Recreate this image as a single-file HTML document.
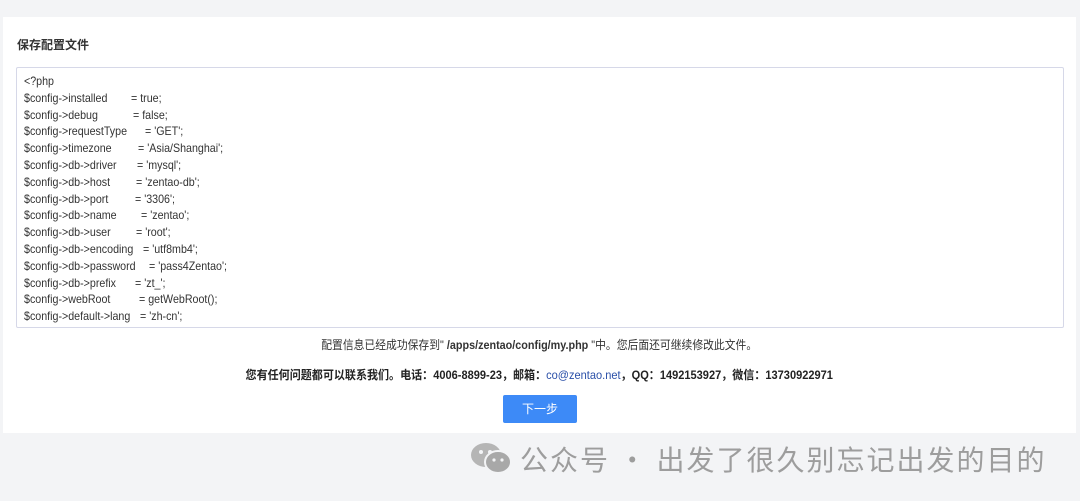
<!DOCTYPE html>
<html><head><meta charset="utf-8"><style>
body{margin:0;width:1080px;height:501px;background:#f3f4f6;font-family:"Liberation Sans","Noto Sans CJK SC",sans-serif;position:relative;overflow:hidden}
.card{position:absolute;left:3px;top:17px;width:1073px;height:416px;background:#fff}
h1{position:absolute;left:14px;top:19px;margin:0;font-size:12px;font-weight:bold;color:#333}
.ta{position:absolute;left:13px;top:50px;width:1046px;height:259px;border:1px solid #d6d8e8;border-radius:2px;overflow:hidden}
.l,.e{position:absolute;font-size:12px;color:#333;white-space:pre;transform:scaleX(0.89);transform-origin:0 0}
.l{left:7px}
.m1{position:absolute;top:319px;left:0;width:1073px;text-align:center;font-size:12px;color:#333}
.m2{position:absolute;top:349px;left:0;width:1073px;text-align:center;font-size:12px;color:#222;font-weight:bold}
.m1 span{display:inline-block;transform:scaleX(0.9)}
.m2 span{display:inline-block;transform:scaleX(0.92)}
.m2 a{color:#2a4fa8;font-weight:normal;text-decoration:none}
.btn{position:absolute;left:500px;top:378px;width:74px;height:28px;background:#3d8af7;border-radius:2px;color:#fff;font-size:12px;text-align:center;line-height:28px}
.wm{position:absolute;left:520px;top:439px;font-size:28px;color:#9d9d9d;font-family:"Noto Sans CJK SC",sans-serif;letter-spacing:2px;white-space:nowrap}
</style></head><body>
<div class="card">
<h1>保存配置文件</h1>
<div class="ta">
<div class="l" style="top:6px">&lt;?php</div>
<div class="l" style="top:23px">$config-&gt;installed</div><div class="e" style="left:114px;top:23px">= true;</div>
<div class="l" style="top:40px">$config-&gt;debug</div><div class="e" style="left:116px;top:40px">= false;</div>
<div class="l" style="top:56px">$config-&gt;requestType</div><div class="e" style="left:128px;top:56px">= 'GET';</div>
<div class="l" style="top:73px">$config-&gt;timezone</div><div class="e" style="left:121px;top:73px">= 'Asia/Shanghai';</div>
<div class="l" style="top:90px">$config-&gt;db-&gt;driver</div><div class="e" style="left:120px;top:90px">= 'mysql';</div>
<div class="l" style="top:107px">$config-&gt;db-&gt;host</div><div class="e" style="left:119px;top:107px">= 'zentao-db';</div>
<div class="l" style="top:124px">$config-&gt;db-&gt;port</div><div class="e" style="left:118px;top:124px">= '3306';</div>
<div class="l" style="top:140px">$config-&gt;db-&gt;name</div><div class="e" style="left:124px;top:140px">= 'zentao';</div>
<div class="l" style="top:157px">$config-&gt;db-&gt;user</div><div class="e" style="left:119px;top:157px">= 'root';</div>
<div class="l" style="top:174px">$config-&gt;db-&gt;encoding</div><div class="e" style="left:126px;top:174px">= 'utf8mb4';</div>
<div class="l" style="top:191px">$config-&gt;db-&gt;password</div><div class="e" style="left:132px;top:191px">= 'pass4Zentao';</div>
<div class="l" style="top:208px">$config-&gt;db-&gt;prefix</div><div class="e" style="left:118px;top:208px">= 'zt_';</div>
<div class="l" style="top:224px">$config-&gt;webRoot</div><div class="e" style="left:122px;top:224px">= getWebRoot();</div>
<div class="l" style="top:241px">$config-&gt;default-&gt;lang</div><div class="e" style="left:123px;top:241px">= 'zh-cn';</div>
</div>
<div class="m1"><span>配置信息已经成功保存到" <b>/apps/zentao/config/my.php</b> "中。您后面还可继续修改此文件。</span></div>
<div class="m2"><span>您有任何问题都可以联系我们。电话：4006-8899-23，邮箱：<a>co@zentao.net</a>，QQ：1492153927，微信：13730922971</span></div>
<div class="btn">下一步</div>
</div>
<svg style="position:absolute;left:470px;top:441px" width="44" height="34" viewBox="0 0 44 34"><ellipse cx="16" cy="14" rx="15" ry="12" fill="#b5b5b5"/><ellipse cx="28" cy="21" rx="13" ry="11" fill="#a8a8a8" stroke="#f3f4f6" stroke-width="2"/><circle cx="11" cy="11" r="2" fill="#f3f4f6"/><circle cx="20" cy="11" r="2" fill="#f3f4f6"/><circle cx="24" cy="19" r="1.6" fill="#f3f4f6"/><circle cx="32" cy="19" r="1.6" fill="#f3f4f6"/></svg>
<div class="wm">公众号 · 出发了很久别忘记出发的目的</div>
</body></html>
